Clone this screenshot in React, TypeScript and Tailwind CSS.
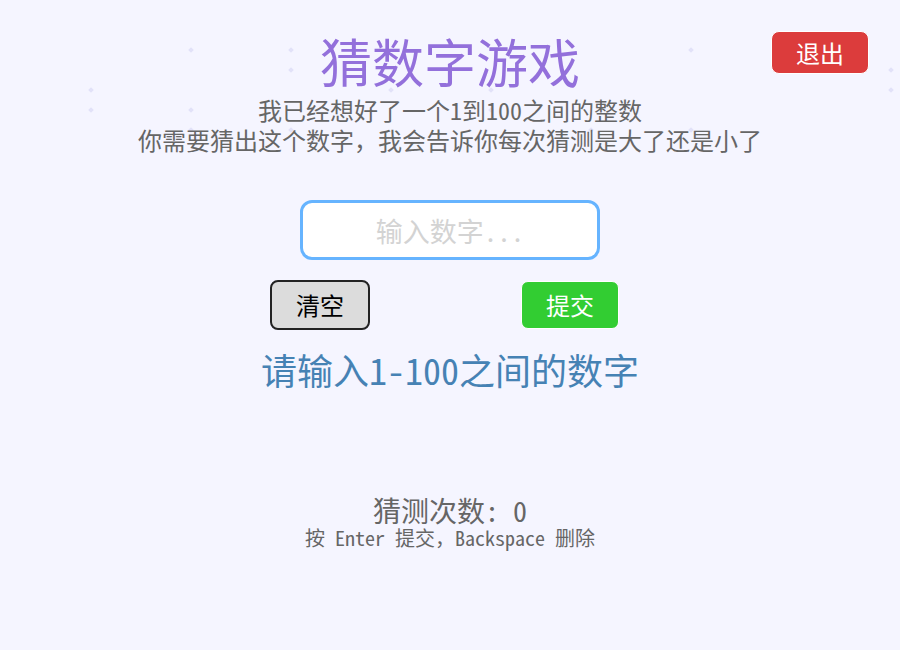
const font = "font-['Noto_Sans_Mono_CJK_SC','Noto_Sans_CJK_SC','DejaVu_Sans_Mono',monospace]";

// faint diamond sparkles behind the header
const sparkles: [number, number][] = [
  [191, 50], [291, 50], [691, 50],
  [291, 70], [891, 70],
  [91, 90], [391, 90], [491, 90], [891, 90],
  [91, 110], [191, 110], [491, 110],
  [191, 130], [291, 130], [591, 130], [691, 130],
];

function Sparkle({ x, y }: { x: number; y: number }) {
  return (
    <div
      className="absolute h-[4px] w-[4px] rotate-45 bg-[#e2e2f8]"
      style={{ left: x - 2, top: y - 2 }}
    />
  );
}

export default function App() {
  return (
    <div className={`relative h-[650px] w-[900px] overflow-hidden bg-[#f5f5ff] ${font}`}>
      {sparkles.map(([x, y]) => (
        <Sparkle key={`${x}-${y}`} x={x} y={y} />
      ))}

      <button className="absolute left-[771px] top-[31px] flex h-[43px] w-[98px] items-center justify-center rounded-[8px] border border-white bg-[#dc3c3c] text-[24px] leading-none text-white">
        退出
      </button>

      <div className="relative flex flex-col items-center pt-[35px]">
        <h1 className="h-[52px] text-[52px] leading-[52px] text-[#9370db]">猜数字游戏</h1>
        <p className="mt-[8px] text-center text-[24px] leading-[30px] text-[#666666]">
          我已经想好了一个1到100之间的整数
          <br />
          你需要猜出这个数字，我会告诉你每次猜测是大了还是小了
        </p>

        <div className="mt-[45px] flex h-[60px] w-[300px] items-center justify-center rounded-[12px] border-[3px] border-[#66b4ff] bg-white">
          <span className="text-[27px] leading-none text-[#d3d3d3]">输入数字...</span>
        </div>

        <div className="mt-[20px] flex items-center gap-[151px] self-start pl-[270px]">
          <button className="flex h-[50px] w-[100px] items-center justify-center rounded-[8px] border-2 border-[#222222] bg-[#dcdcdc] text-[24px] leading-none text-black">
            清空
          </button>
          <button className="flex h-[48px] w-[98px] items-center justify-center rounded-[7px] border border-white bg-[#32cd32] text-[24px] leading-none text-white">
            提交
          </button>
        </div>

        <p className="mt-[21px] h-[36px] text-[36px] leading-[36px] text-[#4682b4]">请输入1-100之间的数字</p>

        <p className="mt-[109px] h-[28px] text-[28px] leading-[28px] text-[#666666]">猜测次数: 0</p>
        <p className="mt-[4px] h-[20px] text-[20px] leading-[20px] text-[#666666]">按 Enter 提交，Backspace 删除</p>
      </div>
    </div>
  );
}
